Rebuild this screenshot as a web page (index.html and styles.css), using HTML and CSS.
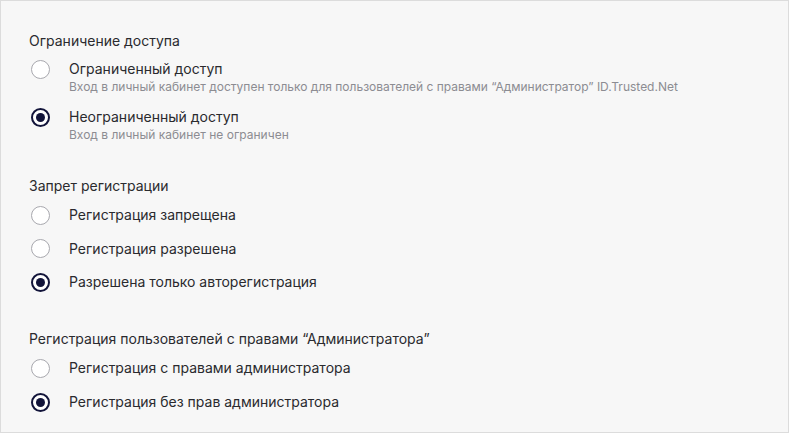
FILE: index.html
```html
<!DOCTYPE html>
<html lang="ru">
<head>
<meta charset="utf-8">
<link rel="stylesheet" href="styles.css">
</head>
<body>
<div class="panel">
  <section class="group g1">
    <div class="group-title">Ограничение доступа</div>
    <div class="options">
      <label class="option">
        <span class="radio"></span>
        <span class="text">
          <span class="label">Ограниченный доступ</span>
          <span class="desc">Вход в личный кабинет доступен только для пользователей с правами “Администратор” ID.Trusted.Net</span>
        </span>
      </label>
      <label class="option">
        <span class="radio checked"></span>
        <span class="text">
          <span class="label">Неограниченный доступ</span>
          <span class="desc">Вход в личный кабинет не ограничен</span>
        </span>
      </label>
    </div>
  </section>
  <section class="group g2">
    <div class="group-title">Запрет регистрации</div>
    <div class="options simple">
      <label class="option"><span class="radio"></span><span class="label">Регистрация запрещена</span></label>
      <label class="option"><span class="radio"></span><span class="label">Регистрация разрешена</span></label>
      <label class="option"><span class="radio checked"></span><span class="label">Разрешена только авторегистрация</span></label>
    </div>
  </section>
  <section class="group g3">
    <div class="group-title">Регистрация пользователей с правами “Администратора”</div>
    <div class="options simple wide">
      <label class="option"><span class="radio"></span><span class="label">Регистрация с правами администратора</span></label>
      <label class="option"><span class="radio checked"></span><span class="label">Регистрация без прав администратора</span></label>
    </div>
  </section>
</div>
</body>
</html>
```

FILE: styles.css
```css
* { box-sizing: border-box; }
html, body { margin: 0; padding: 0; background: #ffffff; }
body {
  font-family: Inter, "Noto Sans", sans-serif;
  color: #222326;
}
.panel {
  width: 789px;
  height: 433px;
  background: #f7f7f7;
  border: 1px solid #dcdcdc;
  padding: 30px 0 0 28px;
  display: flex;
  flex-direction: column;
}
.group { display: flex; flex-direction: column; gap: 8px; }
.g2 { margin-top: 33px; gap: 9px; }
.g3 { margin-top: 37px; gap: 9px; }
.group-title { font-size: 14px; line-height: 20px; color: #2a2a2e; }
.options { display: flex; flex-direction: column; gap: 12px; }
.options.simple { gap: 13.5px; }
.options.wide { gap: 14px; }
.option { display: flex; align-items: flex-start; cursor: pointer; }
.radio {
  flex: none;
  width: 19px;
  height: 19px;
  margin: 0.5px 19px 0 2px;
  border-radius: 50%;
  border: 1px solid #a8a8ae;
  background: #ffffff;
  display: flex;
  align-items: center;
  justify-content: center;
}
.radio.checked { border: 2px solid #12143a; }
.radio.checked::after {
  content: "";
  width: 9px;
  height: 9px;
  border-radius: 50%;
  background: #12143a;
}
.text { display: flex; flex-direction: column; }
.label { font-size: 14px; line-height: 20px; color: #2a2a2e; }
.desc { font-size: 12px; line-height: 16px; color: #8c8c92; }
```
